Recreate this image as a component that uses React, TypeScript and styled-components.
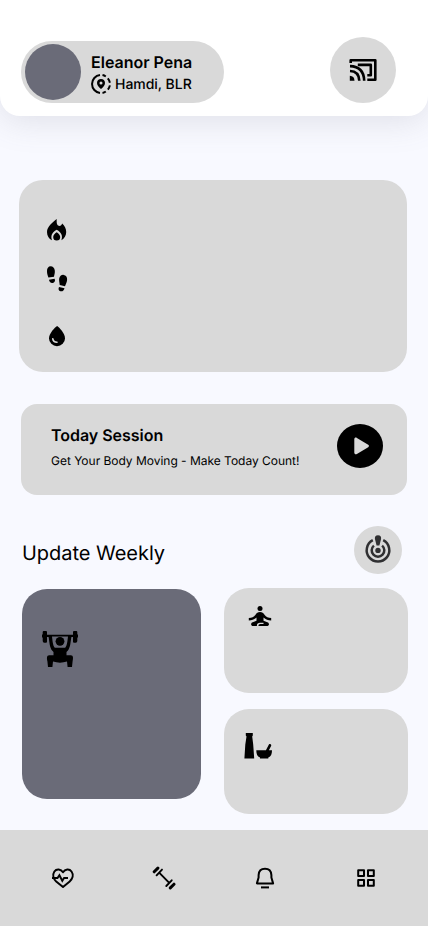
import React from 'react';
import styled, { createGlobalStyle } from 'styled-components';

const surface = '#d9d9d9';
const slate = '#6a6b78';

const GlobalStyle = createGlobalStyle`
  * { box-sizing: border-box; }
  body {
    margin: 0;
    background: #f8f9ff;
    color: #000;
    font-family: Inter, sans-serif;
    text-rendering: geometricPrecision;
  }
  h1, h2, p { margin: 0; }
  svg { display: block; flex: none; }
  button { border: 0; padding: 0; color: inherit; font: inherit; }
`;

const Screen = styled.div`
  width: 428px;
  height: 926px;
  display: flex;
  flex-direction: column;
  background: #f8f9ff;
  overflow: hidden;
`;

const Header = styled.header`
  height: 116px;
  flex: none;
  display: flex;
  justify-content: space-between;
  align-items: flex-start;
  padding: 37px 32px 0 21px;
  background: #fff;
  border-radius: 0 0 20px 20px;
  box-shadow: 0 4px 34px rgba(106, 107, 120, 0.18);
`;

const Profile = styled.div`
  width: 203px;
  height: 62px;
  margin-top: 4px;
  padding: 3px 4px;
  display: flex;
  gap: 10px;
  border-radius: 31px;
  background: ${surface};
`;

const Avatar = styled.div`
  width: 56px;
  height: 56px;
  border-radius: 50%;
  background: ${slate};
`;

const Identity = styled.div`
  padding-top: 8px;
  white-space: nowrap;
`;

const Name = styled.h1`
  font-size: 16px;
  line-height: 20px;
  font-weight: 600;
`;

const Location = styled.p`
  display: flex;
  align-items: flex-start;
  gap: 4px;
  padding-top: 2px;
  font-size: 14px;
  line-height: 22px;
  font-weight: 500;
`;

const City = styled.span`
  letter-spacing: -0.03px;
`;

const RoundButton = styled.button<{ $size: number }>`
  width: ${({ $size }) => $size}px;
  height: ${({ $size }) => $size}px;
  flex: none;
  display: flex;
  align-items: center;
  justify-content: center;
  border-radius: 50%;
  background: ${surface};
`;

const StatsCard = styled.section`
  width: 388px;
  height: 192px;
  flex: none;
  margin: 64px 0 0 19px;
  padding: 38px 0 0 26px;
  border-radius: 24px;
  background: ${surface};
`;

const StatRow = styled.div<{ $height: number }>`
  height: ${({ $height }) => $height}px;
`;

const SessionCard = styled.section`
  width: 386px;
  height: 91px;
  flex: none;
  margin: 32px 0 0 21px;
  padding: 20px 24px 0 30px;
  display: flex;
  justify-content: space-between;
  border-radius: 16px;
  background: ${surface};
`;

const SessionTitle = styled.h2`
  font-size: 16px;
  line-height: 22px;
  font-weight: 600;
  letter-spacing: -0.03px;
`;

const SessionText = styled.p`
  margin-top: 5px;
  font-size: 12px;
  line-height: 20px;
  letter-spacing: -0.02px;
`;

const WeeklyHeader = styled.div`
  height: 48px;
  flex: none;
  margin-top: 31px;
  padding: 0 26px 0 22px;
  display: flex;
  justify-content: space-between;
`;

const WeeklyTitle = styled.h2`
  padding-top: 15px;
  font-size: 20px;
  line-height: 24px;
  font-weight: 400;
  letter-spacing: -0.03px;
`;

const WeeklyGrid = styled.section`
  flex: none;
  display: grid;
  grid-template-columns: 179px 184px;
  grid-template-rows: 105px 105px;
  column-gap: 23px;
  row-gap: 16px;
  margin: 14px 0 0 22px;
`;

const Tile = styled.article`
  padding: 16px 0 0 24px;
  border-radius: 25px;
  background: ${surface};
`;

const MealTile = styled(Tile)`
  padding: 23px 0 0 20px;
`;

const WorkoutTile = styled(Tile)`
  grid-row: span 2;
  height: 210px;
  margin-top: 1px;
  padding: 41px 0 0 19px;
  background: ${slate};
`;

const Nav = styled.nav`
  height: 96px;
  flex: none;
  margin-top: 16px;
  padding: 0 12px;
  display: grid;
  grid-template-columns: repeat(4, 101px);
  background: ${surface};
`;

const NavButton = styled.button`
  display: flex;
  align-items: center;
  justify-content: center;
  background: transparent;
`;

const LocationIcon = () => (
  <svg width="20" height="20" viewBox="0 0 20 20">
    <path d="M9 1.06A9 9 0 0 0 9 18.94M11.5 1.1Q13.3 1.5 14.8 2.5M16.8 4.4Q18.4 6.3 18.9 8.7M18.9 11.4Q18.4 13.7 16.9 15.6M14.8 17.5Q13.3 18.6 11.5 18.9" fill="none" stroke="#000" strokeWidth="2" />
    <path fillRule="evenodd" d="M10 5C7.7 5 6 6.7 6 8.9C6 11.3 8 13.4 10 15C12 13.4 14 11.3 14 8.9C14 6.7 12.3 5 10 5ZM10 7.5A1.5 1.5 0 1 1 10 10.5A1.5 1.5 0 0 1 10 7.5Z" />
  </svg>
);

const CastIcon = () => (
  <svg width="28" height="24" viewBox="0 0 28 24" fill="none" stroke="#000" strokeWidth="2.6" strokeLinejoin="round">
    <path d="M1.7 5V2.3H26.3V21.7H18.3M8.8 6.9H21.8V17.3H18.3M1 8.1Q14.8 8.5 15.2 22.7M1 13Q9.9 13.2 10.3 22.7" />
    <path fill="#000" stroke="none" d="M.8 17.8Q5.3 18 5.5 22.7H.8Z" />
  </svg>
);

const FireIcon = () => (
  <svg width="24" height="24" viewBox="0 0 24 24">
    <path d="M11.7 1C7.5 4.5 2 8.5 2 14C2 18 3.9 20.8 7 22.2C5.6 18 6.6 14.6 11.7 11.8C16.7 14.6 17.9 18 16.4 22.2C19.5 20.5 21.2 17.8 21.2 14.1C21.2 10.6 19.5 7.7 17.2 5.6C16.3 8 14.6 8.5 12.7 7.2C11.4 5.8 11.7 3.5 11.7 1Z" />
    <path d="M11.7 14.2C9.6 15.6 8.2 17.1 8.2 19.1A3.5 3.5 0 0 0 15.2 19.1C15.2 17.1 13.8 15.6 11.7 14.2Z" />
  </svg>
);

const StepsIcon = () => (
  <svg width="24" height="27" viewBox="0 0 24 27">
    <path d="M5.6.3C3.3.3 2 2.4 2 5C2 7.4 2.5 9.2 3.4 11.5L9 10.8C9.3 8.7 10.1 7 9.8 4.6C9.5 2 7.9.3 5.6.3ZM4 13.8L9.6 12.8C10.7 14.9 9.5 16.7 7.7 17C5.6 17.3 4.3 15.9 4 13.8ZM18.7 8.9C21 9.2 22.4 11.2 22.1 13.9C21.8 16.2 20.8 18.2 20 20.2L14.7 19C14.6 16.7 13.8 14.8 14.2 12.6C14.7 10.1 16.5 8.6 18.7 8.9ZM14 21L19.5 22.2C19 24.5 17.4 25.7 15.4 25.2C13.7 24.7 13 23.2 14 21Z" />
  </svg>
);

const WaterIcon = () => (
  <svg width="24" height="24" viewBox="0 0 24 24">
    <path d="M12.1 2C9.9 3.5 4 9.4 4 14.2A8 8 0 0 0 20 14.2C20 9.4 14.3 3.5 12.1 2Z" />
    <path d="M7.8 14.8Q8.2 18 12 18.2" fill="none" stroke={surface} strokeWidth="1.6" strokeLinecap="round" />
  </svg>
);

const PlayIcon = () => (
  <svg width="46" height="44" viewBox="0 0 46 44">
    <ellipse cx="23" cy="22" rx="23" ry="22" />
    <path d="M17.3 15.1C17.3 13.9 18.6 13.2 19.9 13.9L31.2 20.8C32.2 21.4 32.2 22.5 31.2 23.2L19.9 30C18.6 30.8 17.3 30 17.3 28.8Z" fill={surface} />
  </svg>
);

const TargetIcon = () => (
  <svg width="28" height="30" viewBox="0 0 28 30" fill="#303032">
    <path d="M8.8 5.2A11.3 11.3 0 1 0 19.2 5.2M9.9 10.6A6.3 6.3 0 1 0 18.1 10.6" fill="none" stroke="#303032" strokeWidth="2.5" />
    <circle cx="14" cy="15.4" r="2.7" />
    <path d="M14 .3C11.6.3 10.6 1.7 10.9 4L12.6 10.5H15.4L17.1 4C17.4 1.7 16.4.3 14 .3Z" />
  </svg>
);

const LifterIcon = () => (
  <svg width="38" height="38" viewBox="0 0 38 38">
    <path d="M2.7 1H5Q6 1 6 2V4.8H32V2Q32 1 33 1H35.3Q36.3 1 36.3 2V4.6H37V7.4H36.3V11Q36.3 12.8 34.7 12.8H33Q32 12.8 32 11.5V7H30.4C29.5 11.7 29.5 17.4 26.7 20.8L25.5 22V25.2H29.8C32.6 25.2 32.2 28.3 31.6 31.3L31 37H26.6L26 31.5C21.3 33 16.7 33 12 31.5L11.4 37H7L6.4 31.3C5.8 28.3 5.4 25.2 8.2 25.2H12.5V22L11.3 20.8C8.5 17.4 8.5 11.7 7.6 7H6V11.5Q6 12.8 5 12.8H3.3Q1.7 12.8 1.7 11V7.4H1V4.6H1.7V2Q1.7 1 2.7 1Z" />
    <path d="M11 6.6H27C26.5 10.2 26.2 16 24.2 17.8H13.8C11.8 16 11.5 10.2 11 6.6Z" fill={slate} />
    <circle cx="19" cy="11.3" r="4.4" />
  </svg>
);

const YogaIcon = () => (
  <svg width="24" height="24" viewBox="0 0 24 24">
    <circle cx="12" cy="4.5" r="2.5" />
    <path d="M12 8.1C9.6 8.1 8.8 9 7.5 10.8C5.8 13.1 3.8 14 .8 14.1V16.5C4 16.4 6.3 15.4 8.5 13.4V16.7L4.7 18.2C2.3 19.1 2.7 22 5.3 22H8.9C8.8 19.7 10 18.8 12 18.8H15.5V20H12.5C11 20 10.5 20.7 10.4 22H18.7C21.4 22 21.8 19.1 19.3 18.2L15.5 16.7V13.4C17.7 15.4 20.1 16.4 23.2 16.5V14.1C20.3 14 18.2 13.1 16.5 10.8C15.2 9 14.4 8.1 12 8.1Z" />
  </svg>
);

const MealIcon = () => (
  <svg width="29" height="28" viewBox="0 0 29 28">
    <path d="M1.8 1H8.8V3.5L8.2 4.5L9.2 12.5L10.2 26.4H.4L1.3 12.5L2.5 4.5L1.8 3.5ZM12.3 18.2H21.9L24.9 12.6C25.8 11.4 27.8 12.6 27.1 14L24.9 18.2H28C28 22 27 24.4 24.3 25.6V26.4H16V25.6C13.3 24.4 12.3 22 12.3 18.2Z" />
  </svg>
);

const HealthIcon = () => (
  <svg width="24" height="24" viewBox="0 0 24 24" fill="none" stroke="#000" strokeWidth="2">
    <path d="M12 6.2C9.9 3 5.5 2.5 3.4 5.5C1.1 9 2.5 13 5.2 15.4L12 21L18.7 15.4C21.5 13 23 9 20.5 5.5C18.4 2.5 14.1 3 12 6.2Z" strokeLinejoin="round" />
    <path d="M1 12H6.5L8.4 9.2L11.3 14.8L13.1 12H17" strokeWidth="1.9" />
  </svg>
);

const BarbellIcon = () => (
  <svg width="24" height="24" viewBox="0 0 24 24" fill="none" stroke="#000" strokeWidth="1.9" strokeLinecap="round">
    <path d="M7.4 6.8L17 16.7M4.6 9.3L10 3.6M14.3 20L19.7 14.3" />
    <path d="M2.2 5.8L5.9 2.1M18.3 21.9L22 18.2" strokeWidth="3" />
  </svg>
);

const BellIcon = () => (
  <svg width="24" height="24" viewBox="0 0 24 24" fill="none" stroke="#000" strokeWidth="2">
    <path d="M3.9 17.4H20.1L18.4 11.5V9.1C18.2 5.2 15.7 2.8 12 2.8C8.3 2.8 5.8 5.2 5.6 9.1V11.5L3.9 17.4Z" strokeLinejoin="round" />
    <path d="M8 21.4H16" />
  </svg>
);

const GridIcon = () => (
  <svg width="24" height="24" viewBox="0 0 24 24" fill="none" stroke="#000" strokeWidth="2">
    <path d="M4.2 4.2H10V10H4.2ZM14 4.2H19.8V10H14ZM4.2 14H10V19.8H4.2ZM14 14H19.8V19.8H14Z" strokeLinejoin="round" />
  </svg>
);

export default function App() {
  return (
    <>
      <GlobalStyle />
      <Screen>
        <Header>
          <Profile>
            <Avatar />
            <Identity>
              <Name>Eleanor Pena</Name>
              <Location><LocationIcon /><City>Hamdi, BLR</City></Location>
            </Identity>
          </Profile>
          <RoundButton $size={66} aria-label="Cast"><CastIcon /></RoundButton>
        </Header>
        <StatsCard>
          <StatRow $height={48}><FireIcon /></StatRow>
          <StatRow $height={58}><StepsIcon /></StatRow>
          <StatRow $height={24}><WaterIcon /></StatRow>
        </StatsCard>
        <SessionCard>
          <div>
            <SessionTitle>Today Session</SessionTitle>
            <SessionText>Get Your Body Moving - Make Today Count!</SessionText>
          </div>
          <PlayIcon />
        </SessionCard>
        <WeeklyHeader>
          <WeeklyTitle>Update Weekly</WeeklyTitle>
          <RoundButton $size={48} aria-label="Goals"><TargetIcon /></RoundButton>
        </WeeklyHeader>
        <WeeklyGrid>
          <WorkoutTile><LifterIcon /></WorkoutTile>
          <Tile><YogaIcon /></Tile>
          <MealTile><MealIcon /></MealTile>
        </WeeklyGrid>
        <Nav>
          <NavButton aria-label="Health"><HealthIcon /></NavButton>
          <NavButton aria-label="Workouts"><BarbellIcon /></NavButton>
          <NavButton aria-label="Notifications"><BellIcon /></NavButton>
          <NavButton aria-label="Menu"><GridIcon /></NavButton>
        </Nav>
      </Screen>
    </>
  );
}
